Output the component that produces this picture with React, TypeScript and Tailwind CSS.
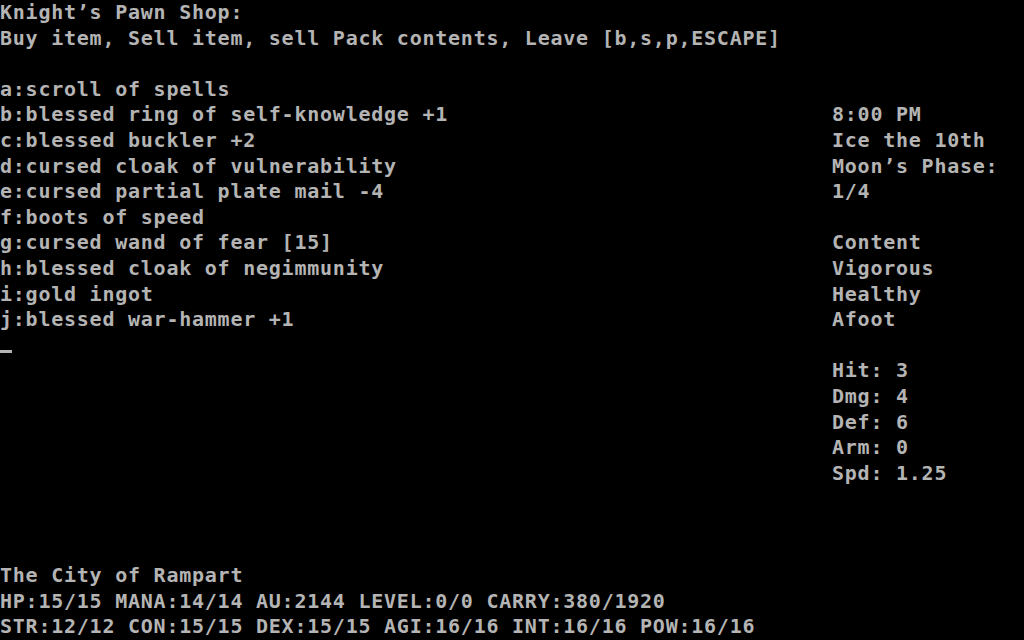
import React from "react";

const Line = ({ children }: { children?: React.ReactNode }) => (
  <div className="h-[25.6px] leading-[25.6px] whitespace-pre">{children ?? " "}</div>
);

export default function App() {
  const items = [
    "a:scroll of spells",
    "b:blessed ring of self-knowledge +1",
    "c:blessed buckler +2",
    "d:cursed cloak of vulnerability",
    "e:cursed partial plate mail -4",
    "f:boots of speed",
    "g:cursed wand of fear [15]",
    "h:blessed cloak of negimmunity",
    "i:gold ingot",
    "j:blessed war-hammer +1",
  ];
  const side = [
    "8:00 PM",
    "Ice the 10th",
    "Moon\u2019s Phase:",
    "1/4",
    "",
    "Content",
    "Vigorous",
    "Healthy",
    "Afoot",
    "",
    "Hit: 3",
    "Dmg: 4",
    "Def: 6",
    "Arm: 0",
    "Spd: 1.25",
  ];
  return (
    <div
      className="w-[1024px] h-[640px] bg-black text-[#b4b4b4] font-bold flex flex-col overflow-hidden text-[20px] tracking-[0.76px]"
      style={{ fontFamily: '"DejaVu Sans Mono", "Liberation Mono", monospace' }}
    >
      <Line>{"Knight\u2019s Pawn Shop:"}</Line>
      <Line>Buy item, Sell item, sell Pack contents, Leave [b,s,p,ESCAPE]</Line>
      <Line />
      <div className="flex">
        <div className="w-[832px] flex flex-col">
          {items.map((t) => (
            <Line key={t}>{t}</Line>
          ))}
          <div className="h-[25.6px] flex items-end pb-[5px]">
            <div className="w-[12px] h-[3px] bg-[#b4b4b4]" />
          </div>
        </div>
        <div className="flex flex-col pt-[25.6px]">
          {side.map((t, i) => (
            <Line key={i}>{t}</Line>
          ))}
        </div>
      </div>
      <div className="mt-auto flex flex-col">
        <Line>The City of Rampart</Line>
        <Line>HP:15/15 MANA:14/14 AU:2144 LEVEL:0/0 CARRY:380/1920</Line>
        <Line>STR:12/12 CON:15/15 DEX:15/15 AGI:16/16 INT:16/16 POW:16/16</Line>
      </div>
    </div>
  );
}
